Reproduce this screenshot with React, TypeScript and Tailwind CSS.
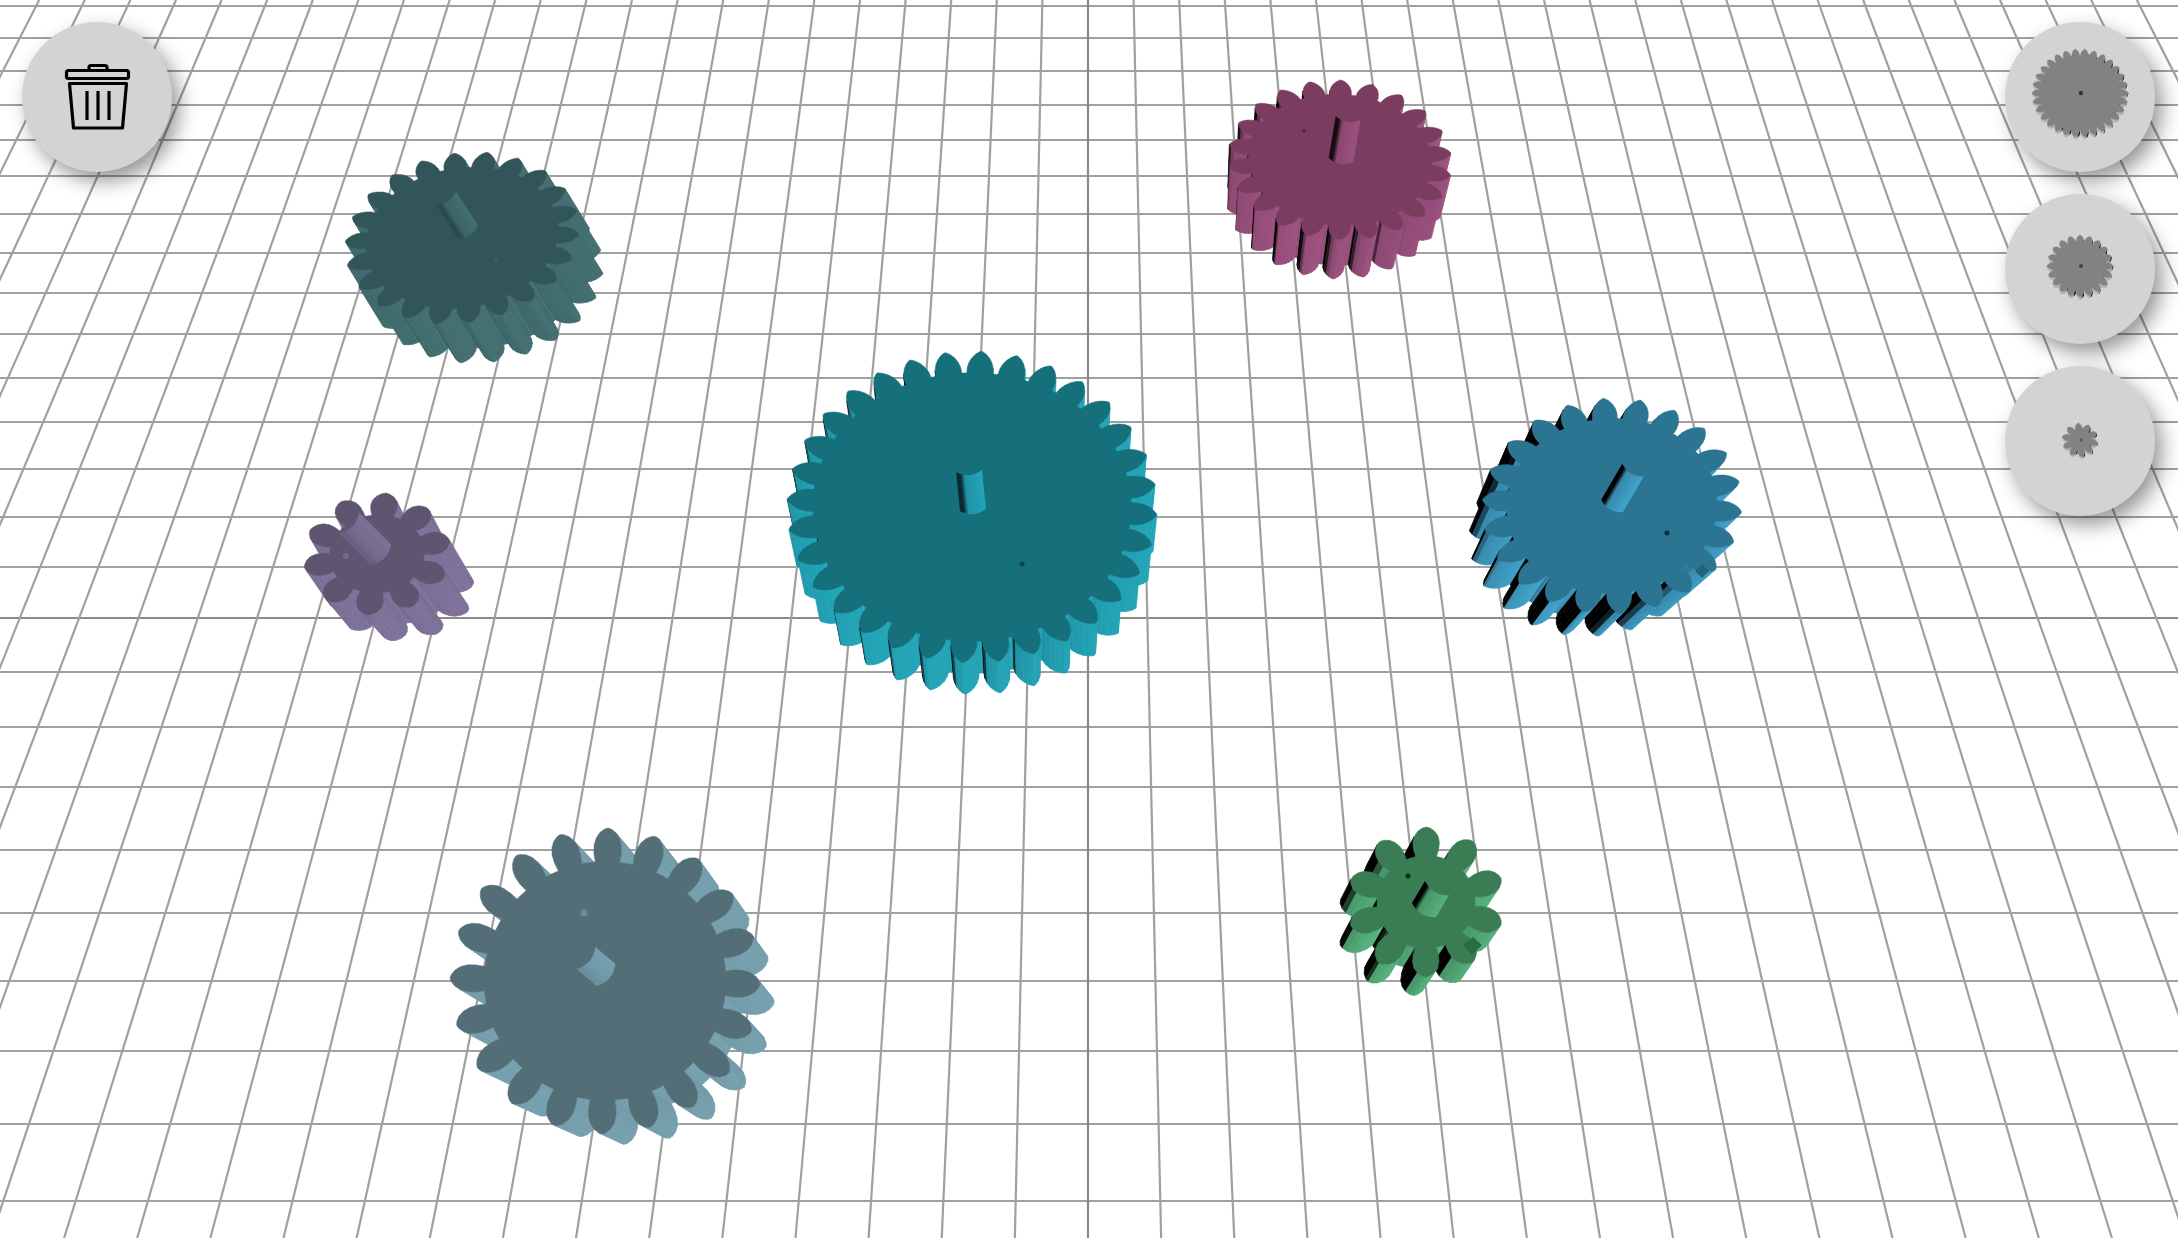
const HORIZONTALS = [6, 38, 71, 105, 140, 176, 214, 253, 293, 334, 378, 422, 469, 517, 567, 618, 672, 727, 787, 850, 913, 981, 1051, 1124, 1201];
const VANISH_X = 1088;
const VANISH_Y = -2050;
const SPACING = 45.6;

type Pt = [number, number];

interface Gear {
  id: string;
  cx: number;
  cy: number;
  rx: number;
  ry: number;
  rot: number;
  teeth: number;
  root: number;
  duty: number;
  phase: number;
  petal?: boolean;
  off: Pt;
  scale: number;
  sy?: number;
  top: string;
  side: string;
  light: string;
  lightDir: Pt;
  black: number;
  shaft?: { from: Pt; to: Pt; w: number; dark: string };
  dot?: { at: Pt; r: number; color: string };
  mark?: { points: string; color: string };
}

const GEARS: Gear[] = [
  {
    id: 'teal', cx: 972, cy: 507, rx: 185, ry: 156, rot: 0, teeth: 32, root: 0.86, duty: 0.84, phase: 0.05,
    off: [2, 36], scale: 0.97, top: '#15707c', side: '#1f93a5', light: '#23a5b8', lightDir: [0.6, 0.8], black: 3.2,
    shaft: { from: [969, 471], to: [973, 510], w: 26, dark: '#0a2a30' },
    dot: { at: [1022, 564], r: 2.5, color: '#0c4650' },
  },
  {
    id: 'magenta', cx: 1340, cy: 160, rx: 112, ry: 80, rot: 4, teeth: 22, root: 0.82, duty: 0.82, phase: 0.1,
    off: [-6, 42], scale: 0.96, top: '#7b3d5f', side: '#8b4870', light: '#9c5180', lightDir: [0.8, 0.6], black: 2.2,
    shaft: { from: [1348, 118], to: [1341, 160], w: 25, dark: '#1a0a14' },
    dot: { at: [1304, 131], r: 2, color: '#5c2c46' },
  },
  {
    id: 'pine', cx: 462, cy: 238, rx: 118, ry: 85, rot: -10, teeth: 22, root: 0.82, duty: 0.82, phase: 0.2,
    off: [24, 39], scale: 1.0, top: '#32555a', side: '#3a6467', light: '#436f71', lightDir: [0.75, 0.65], black: 0.7,
    shaft: { from: [446, 198], to: [468, 232], w: 24, dark: '#2a4a4e' },
    dot: { at: [496, 261], r: 2, color: '#3b6669' },
  },
  {
    id: 'purple', cx: 377, cy: 554, rx: 74, ry: 61, rot: -5, teeth: 10, root: 0.64, duty: 0.86, phase: -0.12, petal: true,
    off: [24, 38], scale: 1.0, sy: 0.8, top: '#5f5570', side: '#74688c', light: '#7f729a', lightDir: [0.6, 0.8], black: 0.3,
    shaft: { from: [349, 523], to: [381, 555], w: 29, dark: '#6a5f80' },
    dot: { at: [346, 556], r: 3, color: '#75698a' },
  },
  {
    id: 'slate', cx: 605, cy: 981, rx: 155, ry: 153, rot: 0, teeth: 20, root: 0.78, duty: 0.76, phase: 0.02, petal: true,
    off: [22, 18], scale: 0.95, top: '#546e78', side: '#6f98a6', light: '#76a0ae', lightDir: [0.7, 0.7], black: 0.05,
    shaft: { from: [586, 958], to: [606, 975], w: 29, dark: '#6a909e' },
    dot: { at: [584, 913], r: 3.5, color: '#6f8a93' },
  },
  {
    id: 'blue', cx: 1612, cy: 506, rx: 130, ry: 108, rot: -3, teeth: 22, root: 0.81, duty: 0.82, phase: 0.12,
    off: [-22, 30], scale: 0.93, top: '#2b7593', side: '#3789ac', light: '#40a4cc', lightDir: [0.85, 0.5], black: 4,
    shaft: { from: [1633, 470], to: [1612, 506], w: 25, dark: '#000000' },
    dot: { at: [1667, 533], r: 2.5, color: '#0c2c3a' },
    mark: { points: '1695,571 1702,564 1709,571 1702,578', color: '#24627c' },
  },
  {
    id: 'green', cx: 1426, cy: 902, rx: 79, ry: 75, rot: -5, teeth: 10, root: 0.62, duty: 0.8, phase: 0.4, petal: true,
    off: [-12, 20], scale: 0.98, top: '#3a7d54', side: '#479669', light: '#56b27e', lightDir: [0.75, 0.65], black: 4,
    shaft: { from: [1437, 888], to: [1424, 910], w: 28, dark: '#000000' },
    dot: { at: [1408, 876], r: 2.5, color: '#0e2a1a' },
    mark: { points: '1463,945 1473,937 1482,945 1472,955', color: '#2a6a44' },
  },
];

const THUMB = { top: '#828282', side: '#a2a2a2', light: '#bdbdbd', lightDir: [-0.75, 0.65] as Pt, black: 3.5 };

const THUMBS: Gear[] = [
  { ...THUMB, id: 't1', cx: 75, cy: 71, rx: 48, ry: 44, rot: 0, teeth: 30, root: 0.85, duty: 0.86, phase: 0, off: [0, 3], scale: 0.98,
    dot: { at: [76, 71], r: 2.2, color: '#333333' } },
  { ...THUMB, id: 't2', cx: 75, cy: 72, rx: 33, ry: 31, rot: 0, teeth: 20, root: 0.8, duty: 0.86, phase: 0, off: [0, 3], scale: 0.98,
    dot: { at: [76, 72], r: 2, color: '#444444' } },
  { ...THUMB, id: 't3', cx: 75, cy: 74, rx: 18, ry: 17, rot: 0, teeth: 10, root: 0.64, duty: 0.84, phase: 0.2, off: [0, 2], scale: 0.98,
    dot: { at: [76, 74], r: 1.6, color: '#555555' } },
];

function rgb(hex: string): number[] {
  return [1, 3, 5].map((i) => parseInt(hex.slice(i, i + 2), 16));
}

function mix(a: string, b: string, t: number) {
  const ca = rgb(a);
  const cb = rgb(b);
  const c = ca.map((v, i) => Math.round(v + (cb[i] - v) * t));
  return `rgb(${c[0]},${c[1]},${c[2]})`;
}

function outline(g: Gear): Pt[] {
  const pts: Pt[] = [];
  const rad = (g.rot * Math.PI) / 180;
  const add = (a: number, r: number) => {
    const x = Math.cos(a) * g.rx * r;
    const y = Math.sin(a) * g.ry * r;
    pts.push([g.cx + x * Math.cos(rad) - y * Math.sin(rad), g.cy + x * Math.sin(rad) + y * Math.cos(rad)]);
  };
  const period = (Math.PI * 2) / g.teeth;
  const half = (period / 2) * g.duty;
  // tapered tooth with a soft tip; small gears have a leaf shape, pinched at the root
  const width = (t: number) =>
    g.petal
      ? half * Math.pow(Math.cos(t), 1.3) * (0.85 + 0.3 * Math.sin(t))
      : half * Math.pow(Math.cos(t), 1.5);
  for (let i = 0; i < g.teeth; i++) {
    const a = g.phase + i * period;
    for (let k = 0; k <= 6; k++) {
      const t = (k / 6) * (Math.PI / 2);
      add(a - width(t), g.root + (1 - g.root) * Math.sin(t));
    }
    for (let k = 5; k >= 0; k--) {
      const t = (k / 6) * (Math.PI / 2);
      add(a + width(t), g.root + (1 - g.root) * Math.sin(t));
    }
    const start = a + width(0);
    const gap = period - width(0) * 2;
    for (let k = 1; k <= 2; k++) {
      add(start + (gap * k) / 3, g.root);
    }
  }
  return pts;
}

function GearShape({ g }: { g: Gear }) {
  const pts = outline(g);
  const sy = g.sy ?? g.scale;
  const back = (p: Pt): Pt => [
    g.cx + (p[0] - g.cx) * g.scale + g.off[0],
    g.cy + (p[1] - g.cy) * sy + g.off[1],
  ];
  const walls = pts
    .map((p, i) => {
      const q = pts[(i + 1) % pts.length];
      const ex = q[0] - p[0];
      const ey = q[1] - p[1];
      const len = Math.hypot(ex, ey) || 1;
      const nx = ey / len;
      const ny = -ex / len;
      const bp = back(p);
      const bq = back(q);
      const dx = (bp[0] + bq[0] - p[0] - q[0]) / 2;
      const dy = (bp[1] + bq[1] - p[1] - q[1]) / 2;
      const s = nx * g.lightDir[0] + ny * g.lightDir[1];
      const color = s >= 0 ? mix(g.side, g.light, s) : mix(g.side, '#000000', Math.min(1, -s * g.black));
      return {
        facing: nx * dx + ny * dy,
        depth: (p[0] + q[0]) * g.off[0] + (p[1] + q[1]) * g.off[1],
        d: `M${p[0].toFixed(1)} ${p[1].toFixed(1)}L${q[0].toFixed(1)} ${q[1].toFixed(1)}L${bq[0].toFixed(1)} ${bq[1].toFixed(1)}L${bp[0].toFixed(1)} ${bp[1].toFixed(1)}Z`,
        color,
      };
    })
    .filter((w) => w.facing > 0)
    .sort((a, b) => a.depth - b.depth);

  const face = pts.map((p) => `${p[0].toFixed(1)},${p[1].toFixed(1)}`).join(' ');

  let shaft = null;
  if (g.shaft) {
    const { from, to, w, dark } = g.shaft;
    const len = Math.hypot(to[0] - from[0], to[1] - from[1]);
    const dir: Pt = [(to[0] - from[0]) / len, (to[1] - from[1]) / len];
    const u: Pt = [(dir[1] * w) / 2, (-dir[0] * w) / 2];
    const bulge = w * 0.32;
    const path = `M${from[0] - u[0]} ${from[1] - u[1]}L${to[0] - u[0]} ${to[1] - u[1]}Q${to[0] + dir[0] * bulge} ${to[1] + dir[1] * bulge} ${to[0] + u[0]} ${to[1] + u[1]}L${from[0] + u[0]} ${from[1] + u[1]}Q${from[0] + dir[0] * bulge} ${from[1] + dir[1] * bulge} ${from[0] - u[0]} ${from[1] - u[1]}Z`;
    shaft = (
      <>
        <linearGradient
          id={`shaft-${g.id}`}
          gradientUnits="userSpaceOnUse"
          x1={from[0] - u[0]}
          y1={from[1] - u[1]}
          x2={from[0] + u[0]}
          y2={from[1] + u[1]}
        >
          <stop offset="0" stopColor={dark} />
          <stop offset="0.15" stopColor={dark} />
          <stop offset="0.32" stopColor={g.side} />
          <stop offset="1" stopColor={g.light} />
        </linearGradient>
        <path d={path} fill={`url(#shaft-${g.id})`} />
      </>
    );
  }

  return (
    <g>
      {walls.map((w, i) => (
        <path key={i} d={w.d} fill={w.color} stroke={w.color} strokeWidth="0.7" />
      ))}
      <polygon points={face} fill={g.top} stroke={g.top} strokeWidth="0.5" />
      {shaft}
      {g.mark && <polygon points={g.mark.points} fill={g.mark.color} />}
      {g.dot && <circle cx={g.dot.at[0]} cy={g.dot.at[1]} r={g.dot.r} fill={g.dot.color} />}
    </g>
  );
}

function Grid() {
  const verticals = [];
  for (let n = -40; n <= 40; n++) {
    const x0 = VANISH_X + n * SPACING;
    const slope = (x0 - VANISH_X) / -VANISH_Y;
    verticals.push(
      <line
        key={n}
        x1={x0}
        y1={0}
        x2={x0 + slope * 1238}
        y2={1238}
        stroke={n === 0 ? '#8a8a8a' : '#a0a0a0'}
        strokeWidth="2.2"
      />,
    );
  }
  return (
    <g>
      {HORIZONTALS.map((y) => (
        <line key={y} x1={0} y1={y} x2={2178} y2={y} stroke={y === 618 ? '#8a8a8a' : '#a0a0a0'} strokeWidth="2.2" />
      ))}
      {verticals}
    </g>
  );
}

function RoundButton({ children }: { children: React.ReactNode }) {
  return (
    <button className="w-[150px] h-[150px] rounded-full bg-[#d3d3d3] shadow-[7px_9px_20px_rgba(0,0,0,0.42)] flex items-center justify-center">
      <svg viewBox="0 0 150 150" className="w-[150px] h-[150px] blur-[0.4px]">
        {children}
      </svg>
    </button>
  );
}

function TrashIcon() {
  return (
    <g fill="none" stroke="#000000" strokeWidth="3.2" strokeLinejoin="round" strokeLinecap="round">
      <path d="M67 48v-2.5q0-2 2-2h14q2 0 2 2v2.5" />
      <rect x="44.5" y="48.5" width="62" height="8" rx="2" />
      <path d="M47.5 61.5h57l-4 44.5h-49z" />
      <path d="M65 69v29M76 69v29M87 69v29" strokeLinecap="butt" />
    </g>
  );
}

export default function App() {
  return (
    <div className="relative w-[2178px] h-[1238px] overflow-hidden bg-white">
      <svg viewBox="0 0 2178 1238" className="block w-[2178px] h-[1238px] blur-[0.5px]">
        <Grid />
        {GEARS.map((g) => (
          <GearShape key={g.id} g={g} />
        ))}
      </svg>

      {/* Controls */}
      <div className="absolute inset-0 p-[22px] pr-[23px] flex justify-between items-start">
        <RoundButton>
          <TrashIcon />
        </RoundButton>
        <div className="flex flex-col gap-[22px]">
          {THUMBS.map((g) => (
            <RoundButton key={g.id}>
              <GearShape g={g} />
            </RoundButton>
          ))}
        </div>
      </div>
    </div>
  );
}
